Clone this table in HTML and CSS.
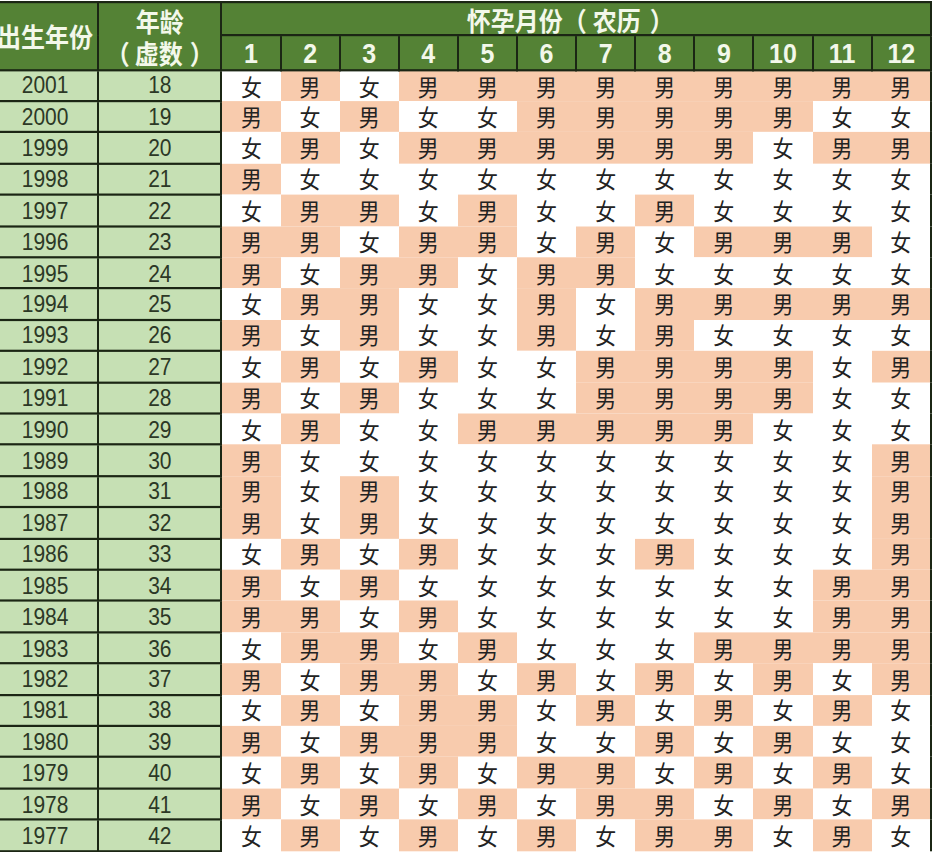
FILE: index.html
```html
<!DOCTYPE html>
<html lang="zh-CN">
<head>
<meta charset="utf-8">
<title>清宫表</title>
<link rel="stylesheet" href="styles.css">
</head>
<body>
<table class="chart">
<colgroup>
<col class="c-year"><col class="c-age">
<col class="c-mon"><col class="c-mon"><col class="c-mon"><col class="c-mon"><col class="c-mon"><col class="c-mon">
<col class="c-mon"><col class="c-mon"><col class="c-mon"><col class="c-mon"><col class="c-mon"><col class="c-mon">
</colgroup>
<thead>
<tr class="h1">
<th rowspan="2" class="hy">出生年份</th>
<th rowspan="2" class="ha">年龄<br><span class="po">（</span>虚数<span class="pc">）</span></th>
<th colspan="12" class="hm">怀孕月份<span class="po">（</span>农历<span class="pc">）</span></th>
</tr>
<tr class="h2">
<th>1</th><th>2</th><th>3</th><th>4</th><th>5</th><th>6</th><th>7</th><th>8</th><th>9</th><th>10</th><th>11</th><th>12</th>
</tr>
</thead>
<tbody>
<tr><td class="y">2001</td><td class="a">18</td><td class="g">女</td><td class="b">男</td><td class="g">女</td><td class="b">男</td><td class="b">男</td><td class="b">男</td><td class="b">男</td><td class="b">男</td><td class="b">男</td><td class="b">男</td><td class="b">男</td><td class="b">男</td></tr>
<tr><td class="y">2000</td><td class="a">19</td><td class="b">男</td><td class="g">女</td><td class="b">男</td><td class="g">女</td><td class="g">女</td><td class="b">男</td><td class="b">男</td><td class="b">男</td><td class="b">男</td><td class="b">男</td><td class="g">女</td><td class="g">女</td></tr>
<tr><td class="y">1999</td><td class="a">20</td><td class="g">女</td><td class="b">男</td><td class="g">女</td><td class="b">男</td><td class="b">男</td><td class="b">男</td><td class="b">男</td><td class="b">男</td><td class="b">男</td><td class="g">女</td><td class="b">男</td><td class="b">男</td></tr>
<tr><td class="y">1998</td><td class="a">21</td><td class="b">男</td><td class="g">女</td><td class="g">女</td><td class="g">女</td><td class="g">女</td><td class="g">女</td><td class="g">女</td><td class="g">女</td><td class="g">女</td><td class="g">女</td><td class="g">女</td><td class="g">女</td></tr>
<tr><td class="y">1997</td><td class="a">22</td><td class="g">女</td><td class="b">男</td><td class="b">男</td><td class="g">女</td><td class="b">男</td><td class="g">女</td><td class="g">女</td><td class="b">男</td><td class="g">女</td><td class="g">女</td><td class="g">女</td><td class="g">女</td></tr>
<tr><td class="y">1996</td><td class="a">23</td><td class="b">男</td><td class="b">男</td><td class="g">女</td><td class="b">男</td><td class="b">男</td><td class="g">女</td><td class="b">男</td><td class="g">女</td><td class="b">男</td><td class="b">男</td><td class="b">男</td><td class="g">女</td></tr>
<tr><td class="y">1995</td><td class="a">24</td><td class="b">男</td><td class="g">女</td><td class="b">男</td><td class="b">男</td><td class="g">女</td><td class="b">男</td><td class="b">男</td><td class="g">女</td><td class="g">女</td><td class="g">女</td><td class="g">女</td><td class="g">女</td></tr>
<tr><td class="y">1994</td><td class="a">25</td><td class="g">女</td><td class="b">男</td><td class="b">男</td><td class="g">女</td><td class="g">女</td><td class="b">男</td><td class="g">女</td><td class="b">男</td><td class="b">男</td><td class="b">男</td><td class="b">男</td><td class="b">男</td></tr>
<tr><td class="y">1993</td><td class="a">26</td><td class="b">男</td><td class="g">女</td><td class="b">男</td><td class="g">女</td><td class="g">女</td><td class="b">男</td><td class="g">女</td><td class="b">男</td><td class="g">女</td><td class="g">女</td><td class="g">女</td><td class="g">女</td></tr>
<tr><td class="y">1992</td><td class="a">27</td><td class="g">女</td><td class="b">男</td><td class="g">女</td><td class="b">男</td><td class="g">女</td><td class="g">女</td><td class="b">男</td><td class="b">男</td><td class="b">男</td><td class="b">男</td><td class="g">女</td><td class="b">男</td></tr>
<tr><td class="y">1991</td><td class="a">28</td><td class="b">男</td><td class="g">女</td><td class="b">男</td><td class="g">女</td><td class="g">女</td><td class="g">女</td><td class="b">男</td><td class="b">男</td><td class="b">男</td><td class="b">男</td><td class="g">女</td><td class="g">女</td></tr>
<tr><td class="y">1990</td><td class="a">29</td><td class="g">女</td><td class="b">男</td><td class="g">女</td><td class="g">女</td><td class="b">男</td><td class="b">男</td><td class="b">男</td><td class="b">男</td><td class="b">男</td><td class="g">女</td><td class="g">女</td><td class="g">女</td></tr>
<tr><td class="y">1989</td><td class="a">30</td><td class="b">男</td><td class="g">女</td><td class="g">女</td><td class="g">女</td><td class="g">女</td><td class="g">女</td><td class="g">女</td><td class="g">女</td><td class="g">女</td><td class="g">女</td><td class="g">女</td><td class="b">男</td></tr>
<tr><td class="y">1988</td><td class="a">31</td><td class="b">男</td><td class="g">女</td><td class="b">男</td><td class="g">女</td><td class="g">女</td><td class="g">女</td><td class="g">女</td><td class="g">女</td><td class="g">女</td><td class="g">女</td><td class="g">女</td><td class="b">男</td></tr>
<tr><td class="y">1987</td><td class="a">32</td><td class="b">男</td><td class="g">女</td><td class="b">男</td><td class="g">女</td><td class="g">女</td><td class="g">女</td><td class="g">女</td><td class="g">女</td><td class="g">女</td><td class="g">女</td><td class="g">女</td><td class="b">男</td></tr>
<tr><td class="y">1986</td><td class="a">33</td><td class="g">女</td><td class="b">男</td><td class="g">女</td><td class="b">男</td><td class="g">女</td><td class="g">女</td><td class="g">女</td><td class="b">男</td><td class="g">女</td><td class="g">女</td><td class="g">女</td><td class="b">男</td></tr>
<tr><td class="y">1985</td><td class="a">34</td><td class="b">男</td><td class="g">女</td><td class="b">男</td><td class="g">女</td><td class="g">女</td><td class="g">女</td><td class="g">女</td><td class="g">女</td><td class="g">女</td><td class="g">女</td><td class="b">男</td><td class="b">男</td></tr>
<tr><td class="y">1984</td><td class="a">35</td><td class="b">男</td><td class="b">男</td><td class="g">女</td><td class="b">男</td><td class="g">女</td><td class="g">女</td><td class="g">女</td><td class="g">女</td><td class="g">女</td><td class="g">女</td><td class="b">男</td><td class="b">男</td></tr>
<tr><td class="y">1983</td><td class="a">36</td><td class="g">女</td><td class="b">男</td><td class="b">男</td><td class="g">女</td><td class="b">男</td><td class="g">女</td><td class="g">女</td><td class="g">女</td><td class="b">男</td><td class="b">男</td><td class="b">男</td><td class="b">男</td></tr>
<tr><td class="y">1982</td><td class="a">37</td><td class="b">男</td><td class="g">女</td><td class="b">男</td><td class="b">男</td><td class="g">女</td><td class="b">男</td><td class="g">女</td><td class="b">男</td><td class="g">女</td><td class="b">男</td><td class="g">女</td><td class="b">男</td></tr>
<tr><td class="y">1981</td><td class="a">38</td><td class="g">女</td><td class="b">男</td><td class="g">女</td><td class="b">男</td><td class="b">男</td><td class="g">女</td><td class="b">男</td><td class="g">女</td><td class="b">男</td><td class="g">女</td><td class="b">男</td><td class="g">女</td></tr>
<tr><td class="y">1980</td><td class="a">39</td><td class="b">男</td><td class="g">女</td><td class="b">男</td><td class="b">男</td><td class="b">男</td><td class="g">女</td><td class="g">女</td><td class="b">男</td><td class="g">女</td><td class="b">男</td><td class="g">女</td><td class="g">女</td></tr>
<tr><td class="y">1979</td><td class="a">40</td><td class="g">女</td><td class="b">男</td><td class="g">女</td><td class="b">男</td><td class="g">女</td><td class="b">男</td><td class="b">男</td><td class="g">女</td><td class="b">男</td><td class="g">女</td><td class="b">男</td><td class="g">女</td></tr>
<tr><td class="y">1978</td><td class="a">41</td><td class="b">男</td><td class="g">女</td><td class="b">男</td><td class="g">女</td><td class="b">男</td><td class="g">女</td><td class="b">男</td><td class="b">男</td><td class="g">女</td><td class="b">男</td><td class="g">女</td><td class="b">男</td></tr>
<tr><td class="y">1977</td><td class="a">42</td><td class="g">女</td><td class="b">男</td><td class="g">女</td><td class="b">男</td><td class="g">女</td><td class="b">男</td><td class="g">女</td><td class="b">男</td><td class="b">男</td><td class="g">女</td><td class="b">男</td><td class="g">女</td></tr>
</tbody>
</table>
</body>
</html>
```
FILE: styles.css
```css
html, body {
  margin: 0;
  padding: 0;
  background: #ffffff;
}
body {
  overflow: hidden;
  height: 852px;
}
/* the source image is slightly stretched vertically */
.chart {
  border-collapse: collapse;
  table-layout: fixed;
  width: 941px;
  margin-left: -9px;
  margin-top: 1px;
  font-family: "Liberation Sans", "Noto Sans CJK SC", sans-serif;
  transform: scaleY(1.1);
  transform-origin: 0 0;
}
.c-year { width: 106px; }
.c-age { width: 123px; }
.c-mon { width: 59px; }

.chart th {
  background: #548235;
  color: #f3f8ea;
  font-family: "Noto Sans CJK SC", sans-serif;
  font-weight: 700;
  font-size: 24px;
  border: 2px solid #1b2614;
  padding: 0;
  text-align: center;
  vertical-align: middle;
}
/* full-width brackets with air on both sides, as in the source font */
.chart .hm .po { margin: 0 6px 0 0; }
.chart .hm .pc { margin: 0 0 0 9px; }
.chart .ha .po { margin: 0 5px 0 0; }
.chart .ha .pc { margin: 0 0 0 7px; }
.chart .h1 { height: 30px; }
.chart .h2 { height: 31.5px; }
.chart .hy { line-height: 28px; }
.chart .ha { line-height: 29px; }
.chart .hm { line-height: 27px; padding-right: 12px; }
.chart .h2 th {
  font-family: "Liberation Sans", sans-serif;
  font-size: 25px;
  line-height: 28px;
}

.chart tbody tr { height: 28.41px; }
.chart td {
  padding: 0;
  text-align: center;
  vertical-align: middle;
  line-height: 25px;
}
.chart td.y, .chart td.a {
  background: #c6e0b4;
  color: #2c3826;
  font-size: 21px;
  border: 2px solid #1b2614;
}
.chart td.b, .chart td.g {
  font-family: "Noto Sans CJK SC", sans-serif;
  font-size: 21px;
  color: #222222;
  border: none;
}
.chart td.b { background: #f8cbad; }
.chart td.g { background: #ffffff; }
.chart td:last-child { border-right: 2px solid #1b2614; }
```
